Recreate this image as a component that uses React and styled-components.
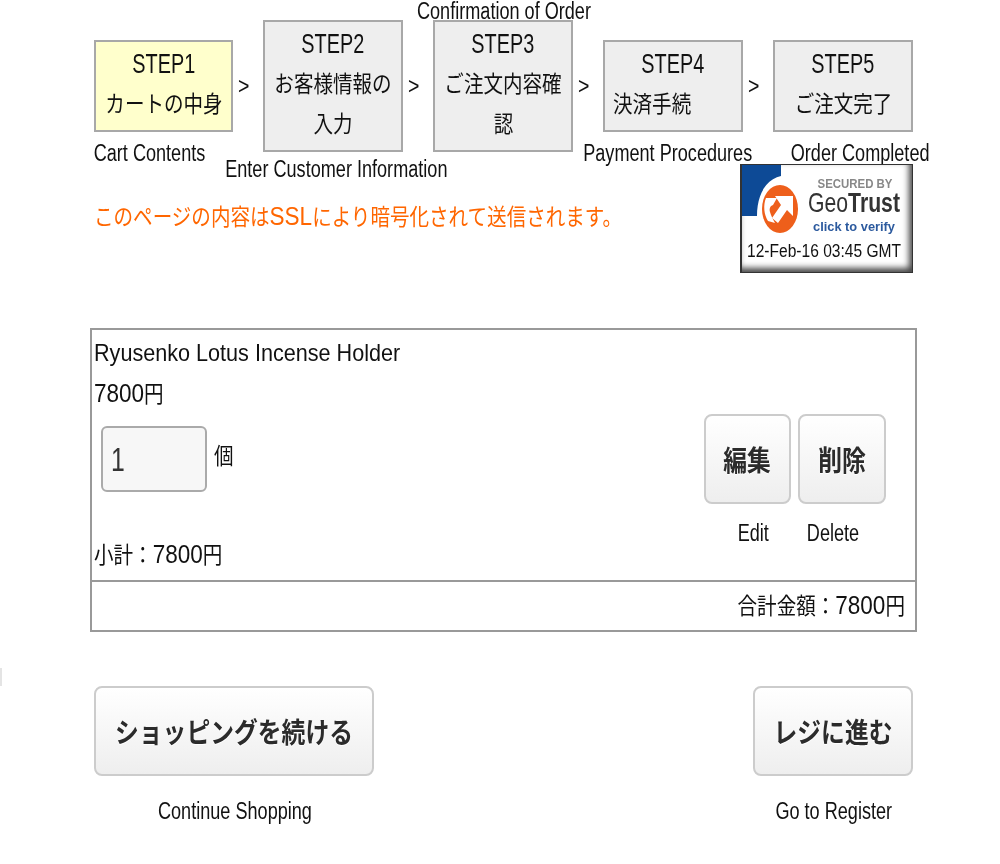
import React from 'react';
import styled, { createGlobalStyle } from 'styled-components';

const Global = createGlobalStyle`
  html, body { margin: 0; padding: 0; background: #fff; }
  body { font-family: "Liberation Sans", "Noto Sans CJK JP", sans-serif; color: #111; }
`;

const Page = styled.div`
  position: relative;
  width: 1000px;
  height: 864px;
  overflow: hidden;
  filter: blur(.35px);
`;

const Narrow = styled.span`
  display: inline-block;
  flex: none;
  white-space: nowrap;
  transform: translateX(${p => p.$shift || 0}px) scaleX(${p => p.$sx || 0.85});
  transform-origin: ${p => p.$origin || 'center'} center;
`;

const Latin = styled.span`
  font-size: 26.5px;
`;

const StepsRow = styled.div`
  display: flex;
  align-items: flex-start;
  height: 164px;
  padding-left: 94px;
`;

const StepColumn = styled.div`
  display: flex;
  flex-direction: column;
  flex: none;
  width: ${p => p.$width}px;
  margin-top: ${p => p.$top}px;
`;

const StepBox = styled.div`
  box-sizing: border-box;
  display: flex;
  flex-direction: column;
  padding: 2px 0 6px;
  border: 2px solid #a8a8a8;
  background: ${p => (p.$active ? '#ffc' : '#eee')};
`;

const StepLine = styled.div`
  display: flex;
  justify-content: ${p => (p.$left ? 'flex-start' : 'center')};
  padding-left: ${p => (p.$left ? 8 : 0)}px;
  height: 40px;
  font-size: 23px;
  line-height: 40px;
`;

const StepId = styled(StepLine)`
  font-size: 27px;
`;

const StepCaption = styled.div`
  display: flex;
  justify-content: center;
  height: 22px;
  margin-top: ${p => (p.$above ? 0 : p.$tall ? 6 : 10)}px;
  margin-bottom: ${p => (p.$above ? -2 : 0)}px;
  font-size: 23.5px;
  line-height: 22px;
`;

const Chevron = styled.div`
  flex: none;
  width: 30px;
  margin-top: 74px;
  padding-left: 5px;
  box-sizing: border-box;
  font-size: 23px;
  line-height: 24px;
`;

const NoticeRow = styled.div`
  display: flex;
  justify-content: space-between;
  align-items: flex-start;
  height: 110px;
  padding: 0 87px 0 94px;
`;

const Notice = styled.div`
  margin-top: 32px;
  color: #f60;
  font-size: 23px;
  line-height: 40px;
`;

const Badge = styled.div`
  box-sizing: border-box;
  position: relative;
  z-index: 1;
  width: 173px;
  height: 109px;
  background: #fff;
  border: 1px solid #333;
  border-left-width: 2px;
  box-shadow: inset -3px -4px 6px #444;
`;

const BadgeArt = styled.svg`
  display: block;
  width: 170px;
  height: 107px;
  filter: blur(.5px);
`;

const Cart = styled.section`
  box-sizing: border-box;
  width: 827px;
  margin: 54px 0 0 90px;
  border: 2px solid #999;
`;

const CartItem = styled.div`
  box-sizing: border-box;
  display: flex;
  justify-content: space-between;
  height: 250px;
  padding: 3px 29px 0 2px;
`;

const ItemInfo = styled.div`
  display: flex;
  flex-direction: column;
`;

const TextLine = styled.div`
  height: 40px;
  font-size: 23px;
  line-height: 40px;
`;

const ItemName = styled(TextLine)`
  font-size: 24px;
`;

const QuantityRow = styled.div`
  display: flex;
  align-items: flex-start;
  height: 121px;
  padding: 13px 0 0 7px;
  box-sizing: border-box;
`;

const QuantityInput = styled.div`
  box-sizing: border-box;
  width: 106px;
  height: 66px;
  padding-left: 8px;
  border: 2px solid #aaa;
  border-radius: 6px;
  background: #f7f7f7;
  color: #333;
  font-size: 33px;
  line-height: 64px;
`;

const QuantityUnit = styled.div`
  margin: 10px 0 0 7px;
  font-size: 23px;
  line-height: 40px;
`;

const ItemActions = styled.div`
  display: flex;
  gap: 7px;
  padding-top: 81px;
`;

const ActionColumn = styled.div`
  display: flex;
  flex-direction: column;
  align-items: center;
`;

const PushButton = styled.button`
  box-sizing: border-box;
  display: flex;
  justify-content: center;
  align-items: center;
  width: ${p => p.$width}px;
  height: 90px;
  padding: 0;
  border: 2px solid #ccc;
  border-radius: 8px;
  background: linear-gradient(#fff, #eee);
  color: #2b2b2b;
  font-family: inherit;
  font-size: 28px;
  font-weight: 700;
  text-shadow: 0 1px 0 #fff;
`;

const ButtonCaption = styled.div`
  display: flex;
  justify-content: center;
  margin-top: ${p => p.$gap}px;
  font-size: 23.5px;
  line-height: 24px;
`;

const CartTotal = styled.div`
  display: flex;
  justify-content: flex-end;
  height: 48px;
  padding-right: 10px;
  border-top: 2px solid #999;
  font-size: 23px;
  line-height: 47px;
`;

const BottomRow = styled.div`
  display: flex;
  justify-content: space-between;
  margin-top: 54px;
  padding: 0 87px 0 94px;
`;

const EdgeTick = styled.div`
  position: absolute;
  left: 0;
  top: 668px;
  width: 2px;
  height: 18px;
  background: #e4e4e4;
`;

const GeoTrustLogo = () => (
  <BadgeArt viewBox="0 0 170 107" role="img" aria-label="GeoTrust">
    <path d="M0 0H39V11C25 14 15 28 15 51H0Z" fill="#0d4a96" />
    <ellipse cx="38" cy="44" rx="18" ry="24" fill="#ee5f1b" />
    <path d="M33 31H51V51L45 45L36 58L30 53L39 40Z" fill="#fff" />
    <path d="M24 33H35L31 40C28 41 27 44 28 47C29 51 31 54 33 58L26 56C22 50 21 40 24 33Z" fill="#fff" />
    <text x="113" y="23" textAnchor="middle" fontFamily="Liberation Sans" fontWeight="700" fontSize="12" fill="#888" textLength="75" lengthAdjust="spacingAndGlyphs">SECURED BY</text>
    <text x="66" y="47" fontFamily="Liberation Sans" fontSize="28" fill="#333" textLength="92" lengthAdjust="spacingAndGlyphs">Geo<tspan fontWeight="700">Trust</tspan></text>
    <text x="71" y="66" fontFamily="Liberation Sans" fontWeight="700" fontSize="13.5" fill="#2c5a9e" textLength="82" lengthAdjust="spacingAndGlyphs">click to verify</text>
    <text x="5" y="92" fontFamily="Liberation Sans" fontSize="17.5" fill="#111" textLength="154" lengthAdjust="spacingAndGlyphs">12-Feb-16 03:45 GMT</text>
  </BadgeArt>
);

const steps = [
  { id: 'STEP1', lines: ['カートの中身'], caption: 'Cart Contents', shift: -14, top: 40, active: true, width: 139 },
  { id: 'STEP2', lines: ['お客様情報の', '入力'], caption: 'Enter Customer Information', shift: 3, top: 20, tall: true },
  { id: 'STEP3', lines: ['ご注文内容確', '認'], caption: 'Confirmation of Order', shift: 1, top: 0, above: true },
  { id: 'STEP4', lines: ['決済手続'], caption: 'Payment Procedures', shift: -5, top: 40, left: true },
  { id: 'STEP5', lines: ['ご注文完了'], caption: 'Order Completed', shift: 17, top: 40 },
];

const CAPTION_SX = 0.77;

export default function App() {
  return (
    <Page>
      <Global />
      <EdgeTick />
      <StepsRow>
        {steps.map((s, i) => {
          const caption = (
            <StepCaption $above={s.above} $tall={s.tall}>
              <Narrow $shift={s.shift} $sx={CAPTION_SX}>{s.caption}</Narrow>
            </StepCaption>
          );
          return (
            <React.Fragment key={s.id}>
              {i > 0 && <Chevron><Narrow $origin="left">&gt;</Narrow></Chevron>}
              <StepColumn $top={s.top} $width={s.width || 140}>
                {s.above && caption}
                <StepBox $active={s.active}>
                  <StepId><Narrow $sx={0.735}>{s.id}</Narrow></StepId>
                  {s.lines.map(l => (
                    <StepLine key={l} $left={s.left}>
                      <Narrow $origin={s.left ? 'left' : 'center'}>{l}</Narrow>
                    </StepLine>
                  ))}
                </StepBox>
                {!s.above && caption}
              </StepColumn>
            </React.Fragment>
          );
        })}
      </StepsRow>

      <NoticeRow>
        <Notice><Narrow $origin="left">このページの内容は<Latin>SSL</Latin>により暗号化されて送信されます。</Narrow></Notice>
        <Badge><GeoTrustLogo /></Badge>
      </NoticeRow>

      <Cart>
        <CartItem>
          <ItemInfo>
            <ItemName><Narrow $origin="left" $sx={0.9}>Ryusenko Lotus Incense Holder</Narrow></ItemName>
            <TextLine><Narrow $origin="left"><Latin>7800</Latin>円</Narrow></TextLine>
            <QuantityRow>
              <QuantityInput><Narrow $origin="left" $sx={0.75}>1</Narrow></QuantityInput>
              <QuantityUnit><Narrow $origin="left">個</Narrow></QuantityUnit>
            </QuantityRow>
            <TextLine><Narrow $origin="left">小計：<Latin>7800</Latin>円</Narrow></TextLine>
          </ItemInfo>
          <ItemActions>
            <ActionColumn>
              <PushButton $width={87}><Narrow>編集</Narrow></PushButton>
              <ButtonCaption $gap={17}><Narrow $sx={CAPTION_SX} $shift={6}>Edit</Narrow></ButtonCaption>
            </ActionColumn>
            <ActionColumn>
              <PushButton $width={88}><Narrow>削除</Narrow></PushButton>
              <ButtonCaption $gap={17}><Narrow $sx={CAPTION_SX} $shift={-9}>Delete</Narrow></ButtonCaption>
            </ActionColumn>
          </ItemActions>
        </CartItem>
        <CartTotal><Narrow $origin="right">合計金額：<Latin>7800</Latin>円</Narrow></CartTotal>
      </Cart>

      <BottomRow>
        <ActionColumn>
          <PushButton $width={280}><Narrow>ショッピングを続ける</Narrow></PushButton>
          <ButtonCaption $gap={23}><Narrow $sx={CAPTION_SX} $shift={1}>Continue Shopping</Narrow></ButtonCaption>
        </ActionColumn>
        <ActionColumn>
          <PushButton $width={160}><Narrow>レジに進む</Narrow></PushButton>
          <ButtonCaption $gap={23}><Narrow $sx={CAPTION_SX} $shift={1}>Go to Register</Narrow></ButtonCaption>
        </ActionColumn>
      </BottomRow>
    </Page>
  );
}
